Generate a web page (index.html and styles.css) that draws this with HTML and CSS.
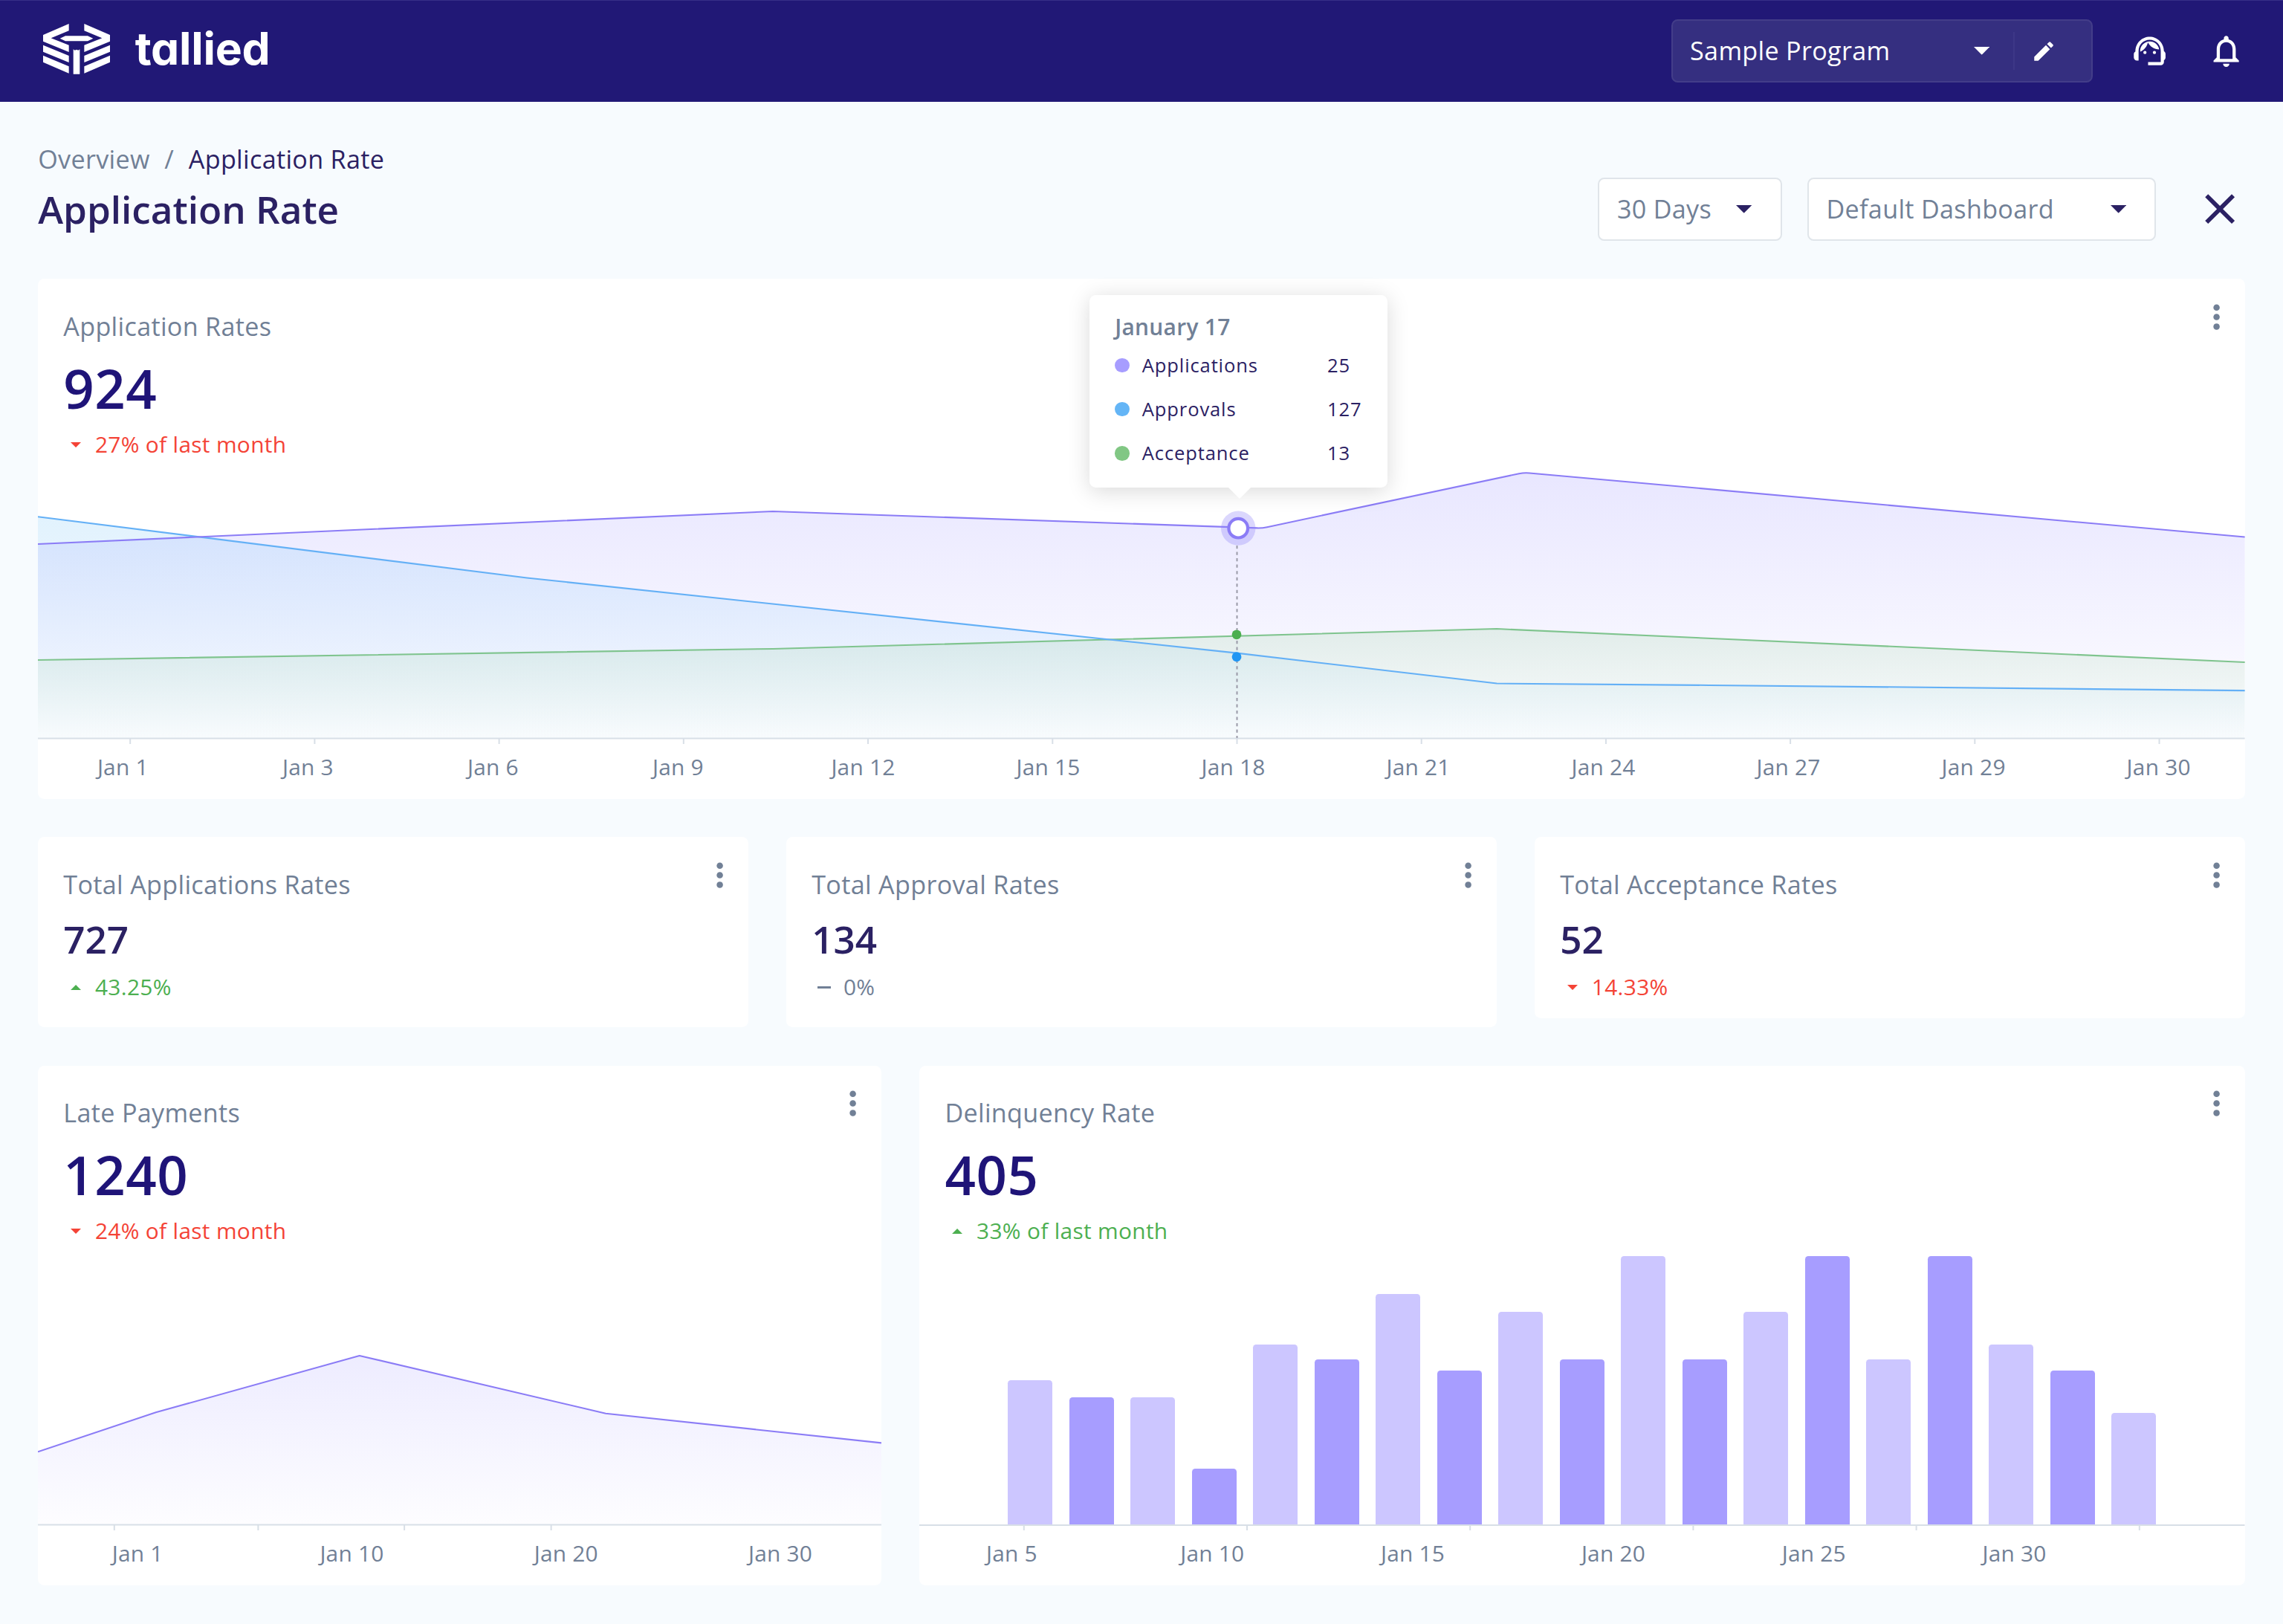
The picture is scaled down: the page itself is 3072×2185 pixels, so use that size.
FILE: index.html
```html
<!DOCTYPE html>
<html lang="en">
<head>
<meta charset="utf-8">
<title>Application Rate</title>
<link rel="stylesheet" href="styles.css">
</head>
<body>
<svg class="defs" width="0" height="0" aria-hidden="true">
  <defs>
    <linearGradient id="fill-purple" x1="0" y1="0" x2="0" y2="1"><stop offset="0" stop-color="#9d95ff" stop-opacity=".23"/><stop offset="1" stop-color="#9d95ff" stop-opacity=".01"/></linearGradient>
    <linearGradient id="fill-blue" x1="0" y1="0" x2="0" y2="1"><stop offset="0" stop-color="#64bcf6" stop-opacity=".19"/><stop offset="1" stop-color="#64bcf6" stop-opacity=".03"/></linearGradient>
    <linearGradient id="fill-green" x1="0" y1="0" x2="0" y2="1"><stop offset="0" stop-color="#81c784" stop-opacity=".17"/><stop offset="1" stop-color="#81c784" stop-opacity=".01"/></linearGradient>
    <linearGradient id="fill-late" x1="0" y1="0" x2="0" y2="1"><stop offset="0" stop-color="#9d95ff" stop-opacity=".18"/><stop offset="1" stop-color="#9d95ff" stop-opacity=".02"/></linearGradient>
    <symbol id="kebab" viewBox="0 0 24 24"><circle cx="12" cy="6" r="2"/><circle cx="12" cy="12" r="2"/><circle cx="12" cy="18" r="2"/></symbol>
    <symbol id="caret-down" viewBox="0 0 10 5"><path d="M0 0l5 5 5-5z"/></symbol>
    <symbol id="caret-up" viewBox="0 0 10 5"><path d="M0 5l5-5 5 5z"/></symbol>
  </defs>
</svg>

<header class="topbar">
  <div class="brand">
    <svg class="brand-mark" viewBox="0 0 270 204">
      <path d="M104 0v28L32 58l72 28v28L0 71V45z"/>
      <path d="M166 0v28l72 30-72 28v28l104-43V45z"/>
      <path d="M0 86l104 43v27L0 113zM0 128l104 44v28L0 155z"/>
      <path d="M270 86l-104 43v27l104-43zM270 128l-104 44v28l104-45z"/>
      <path d="M68 59l22-10h90l22 10-22 11H90z"/>
      <path d="M122 103l6 4 7-3 7 3 6-4v100h-26z"/>
    </svg>
    <span class="brand-name">tallied</span>
  </div>
  <div class="program">
    <span class="program-name">Sample Program</span>
    <svg class="caret"><use href="#caret-down"/></svg>
    <span class="program-edit">
      <svg viewBox="0 0 24 24"><path d="M3 17.25V21h3.75L17.81 9.94l-3.75-3.75L3 17.25zM20.71 7.04c.39-.39.39-1.02 0-1.41l-2.34-2.34a.9959.9959 0 0 0-1.41 0l-1.83 1.83 3.75 3.75 1.83-1.83z"/></svg>
    </span>
  </div>
  <svg class="top-icon" viewBox="0 0 24 24"><path d="M21 12.22C21 6.73 16.74 3 12 3c-4.69 0-9 3.65-9 9.28-.6.34-1 .98-1 1.72v2c0 1.1.9 2 2 2h1v-6.1c0-3.87 3.13-7 7-7s7 3.13 7 7V19h-8v2h8c1.1 0 2-.9 2-2v-1.22c.59-.31 1-.92 1-1.64v-2.3c0-.7-.41-1.31-1-1.62z"/><circle cx="9" cy="13" r="1"/><circle cx="15" cy="13" r="1"/><path d="M18 11.03C17.52 8.18 15.04 6 12.05 6c-3.03 0-6.29 2.51-6.03 6.45 2.47-1.01 4.33-3.21 4.86-5.89 1.31 2.63 4 4.44 7.12 4.47z"/></svg>
  <svg class="top-icon" viewBox="0 0 24 24"><path d="M12 22c1.1 0 2-.9 2-2h-4c0 1.1.9 2 2 2zm6-6v-5c0-3.07-1.63-5.64-4.5-6.32V4c0-.83-.67-1.5-1.5-1.5s-1.5.67-1.5 1.5v.68C7.64 5.36 6 7.92 6 11v5l-2 2v1h16v-1l-2-2zm-2 1H8v-6c0-2.48 1.51-4.5 4-4.5s4 2.02 4 4.5v6z"/></svg>
</header>

<main class="page">
  <nav class="crumbs"><a>Overview</a><span class="crumb-sep">/</span><span class="crumb-here">Application Rate</span></nav>
  <div class="title-row">
    <h1>Application Rate</h1>
    <div class="picker picker-days"><span>30 Days</span><svg class="caret"><use href="#caret-down"/></svg></div>
    <div class="picker picker-board"><span>Default Dashboard</span><svg class="caret"><use href="#caret-down"/></svg></div>
    <svg class="close" viewBox="0 0 24 24"><path d="M19 6.41L17.59 5 12 10.59 6.41 5 5 6.41 10.59 12 5 17.59 6.41 19 12 13.41 17.59 19 19 17.59 13.41 12z"/></svg>
  </div>

  <section class="card card-chart card-main">
    <svg class="kebab"><use href="#kebab"/></svg>
    <h2>Application Rates</h2>
    <p class="figure">924</p>
    <p class="delta down"><svg><use href="#caret-down"/></svg>27% of last month</p>
    <svg class="plot plot-main" viewBox="0 0 2969.6 370" preserveAspectRatio="none">
      <path fill="url(#fill-purple)" d="M0 101L989 57L1647 79.7L2000 4.9L2969.6 91.6V362.6H0z"/>
      <path fill="url(#fill-blue)" d="M0 64.2L658 146.5L1613 247.7L1963 288.6L2249 291L2969.6 298.2V362.6H0z"/>
      <path fill="url(#fill-green)" d="M0 257L989 242L1963 215.1L2969.6 260.1V362.6H0z"/>
      <path class="line green" d="M0 257L989 242L1963 215.1L2969.6 260.1"/>
      <path class="line blue" d="M0 64.2L658 146.5L1613 247.7L1963 288.6L2249 291L2969.6 298.2"/>
      <path class="line purple" d="M0 101L989 57L1640 79.4Q1647 79.7 1654 78.2L1993 6.2Q2000 4.9 2007 5.5L2969.6 91.6"/>
      <path class="axis" d="M0 362.6H2969.6"/>
      <path class="axis" d="M124.2 362V370M372.4 362V370M620.6 362V370M868.8 362V370M1117 362V370M1365.3 362V370M1613.5 362V370M1861.7 362V370M2109.9 362V370M2358.1 362V370M2606.3 362V370M2854.5 362V370"/>
      <path class="guide" d="M1613.5 103V362"/>
      <circle cx="1613" cy="222.9" r="6.4" fill="#4caf50"/>
      <circle cx="1613" cy="252.8" r="6.4" fill="#2196f3"/>
      <circle cx="1615.2" cy="79.7" r="23.2" fill="#8f82f8" fill-opacity=".32"/>
      <circle cx="1615.2" cy="79.7" r="12.8" fill="#fff" stroke="#8b7cf6" stroke-width="4.2"/>
    </svg>
    <div class="ticks"><span>Jan 1</span><span>Jan 3</span><span>Jan 6</span><span>Jan 9</span><span>Jan 12</span><span>Jan 15</span><span>Jan 18</span><span>Jan 21</span><span>Jan 24</span><span>Jan 27</span><span>Jan 29</span><span>Jan 30</span></div>
    <div class="tooltip">
      <h3>January 17</h3>
      <dl>
        <dt class="k-purple">Applications</dt><dd>25</dd>
        <dt class="k-blue">Approvals</dt><dd>127</dd>
        <dt class="k-green">Acceptance</dt><dd>13</dd>
      </dl>
    </div>
  </section>

  <div class="row row-stats">
    <section class="card card-stat">
      <svg class="kebab"><use href="#kebab"/></svg>
      <h2>Total Applications Rates</h2>
      <p class="figure">727</p>
      <p class="delta up"><svg><use href="#caret-up"/></svg>43.25%</p>
    </section>
    <section class="card card-stat">
      <svg class="kebab"><use href="#kebab"/></svg>
      <h2>Total Approval Rates</h2>
      <p class="figure">134</p>
      <p class="delta flat"><i></i>0%</p>
    </section>
    <section class="card card-stat card-short">
      <svg class="kebab"><use href="#kebab"/></svg>
      <h2>Total Acceptance Rates</h2>
      <p class="figure">52</p>
      <p class="delta down"><svg><use href="#caret-down"/></svg>14.33%</p>
    </section>
  </div>

  <div class="row row-bottom">
    <section class="card card-chart card-late">
      <svg class="kebab"><use href="#kebab"/></svg>
      <h2>Late Payments</h2>
      <p class="figure">1240</p>
      <p class="delta down"><svg><use href="#caret-down"/></svg>24% of last month</p>
      <svg class="plot plot-late" viewBox="0 0 1134.9 241" preserveAspectRatio="none">
        <path fill="url(#fill-late)" d="M0 135.3L158.7 82.3L432.7 6L764 83.7L1134.9 123.3V233.5H0z"/>
        <path class="line purple" d="M0 135.3L158.7 82.3L432.7 6L764 83.7L1134.9 123.3"/>
        <path class="axis" d="M0 233.5H1134.9M102.8 233V241M296.4 233V241M493.1 233V241M690.6 233V241"/>
      </svg>
      <div class="ticks"><span>Jan 1</span><span>Jan 10</span><span>Jan 20</span><span>Jan 30</span></div>
    </section>
    <section class="card card-chart card-delinquency">
      <svg class="kebab"><use href="#kebab"/></svg>
      <h2>Delinquency Rate</h2>
      <p class="figure">405</p>
      <p class="delta up"><svg><use href="#caret-up"/></svg>33% of last month</p>
      <div class="bars">
        <i style="height:53.7%"></i><i style="height:47.3%"></i><i style="height:47.3%"></i><i style="height:20.8%"></i><i style="height:66.8%"></i><i style="height:61.5%"></i><i style="height:85.7%"></i><i style="height:57.3%"></i><i style="height:79.2%"></i><i style="height:61.5%"></i><i style="height:100%"></i><i style="height:61.5%"></i><i style="height:79.2%"></i><i style="height:100%"></i><i style="height:61.5%"></i><i style="height:100%"></i><i style="height:66.8%"></i><i style="height:57.3%"></i><i style="height:41.4%"></i>
      </div>
      <svg class="plot plot-axis" viewBox="0 0 1783.5 8.6" preserveAspectRatio="none">
        <path class="axis" d="M0 1H1783.5M140.8 1V8.6M441 1V8.6M741.2 1V8.6M1041.4 1V8.6M1341.6 1V8.6M1641.8 1V8.6"/>
      </svg>
      <div class="ticks"><span>Jan 5</span><span>Jan 10</span><span>Jan 15</span><span>Jan 20</span><span>Jan 25</span><span>Jan 30</span></div>
    </section>
  </div>
</main>
</body>
</html>
```
FILE: styles.css
```css
/* 1rem = 10 layout units on a 1440-unit wide canvas */
html {
  font-size: 21.33333px;
}

* {
  box-sizing: border-box;
}

body {
  margin: 0;
  background: #f7fbfe;
  font-family: "Open Sans", "Noto Sans", sans-serif;
  font-size: 1.6rem;
  letter-spacing: 0.015rem;
  color: #718096;
}

h1, h2, h3, p, dl, dd {
  margin: 0;
}

.defs {
  position: absolute;
}

/* ---------- top bar ---------- */

.topbar {
  display: flex;
  align-items: center;
  gap: 2.4rem;
  height: 6.4rem;
  padding: 0 2.4rem 0 2.7rem;
  background: #211876;
  border-top: 1px solid #372f88;
}

.brand {
  display: flex;
  align-items: center;
  gap: 1.6rem;
  margin-right: auto;
  padding-bottom: 0.22rem;
  color: #fff;
}

.brand-mark {
  width: 4.22rem;
  height: 3.19rem;
  fill: #fff;
}

.brand-name {
  padding-bottom: 0.1rem;
  font-family: Inter, "Open Sans", sans-serif;
  font-weight: 700;
  font-size: 2.84rem;
  line-height: 3.2rem;
  letter-spacing: -0.01rem;
  font-feature-settings: "cv11";
}

.program {
  display: flex;
  align-items: center;
  width: 26.6rem;
  height: 4rem;
  padding-left: 1.1rem;
  background: #352f80;
  border: 2px solid #433d89;
  border-radius: 0.4rem;
  color: #fff;
}

.program-name {
  flex: 1;
  padding-bottom: 0.04rem;
}

.caret {
  width: 1rem;
  height: 0.5rem;
  fill: currentColor;
}

.program-edit {
  display: flex;
  align-items: center;
  width: 4.93rem;
  height: 2.4rem;
  margin-left: 1.5rem;
  padding-left: 1.05rem;
  border-left: 2px solid #3d3787;
}

.program-edit svg {
  width: 1.6rem;
  height: 1.6rem;
  fill: #fff;
}

.top-icon {
  width: 2.4rem;
  height: 2.4rem;
  fill: #fff;
}

/* ---------- page head ---------- */

.page {
  padding: 2.4rem;
}

.crumbs {
  display: flex;
  height: 2.4rem;
  line-height: 2.45rem;
}

.crumb-sep {
  margin: 0 0.92rem;
}

.crumb-here {
  color: #2b2163;
}

.title-row {
  display: flex;
  align-items: center;
  height: 4rem;
  margin-bottom: 2.4rem;
}

h1 {
  flex: 1;
  font-size: 2.4rem;
  font-weight: 600;
  letter-spacing: 0;
  line-height: 4rem;
  color: #2b2163;
}

.picker {
  display: flex;
  align-items: center;
  justify-content: space-between;
  height: 4rem;
  padding: 0 1.8rem 0 1.1rem;
  background: #fff;
  border: 2px solid #e0e5ea;
  border-radius: 0.4rem;
}

.picker span {
  padding-bottom: 0.04rem;
}

.picker .caret {
  color: #2b2163;
}

.picker-days {
  width: 11.6rem;
  margin-right: 1.6rem;
}

.picker-board {
  width: 22rem;
  margin-right: 2.4rem;
}

.close {
  width: 3.2rem;
  height: 3.2rem;
  fill: #2b2163;
}

/* ---------- cards ---------- */

.card {
  position: relative;
  display: flex;
  flex-direction: column;
  padding-top: 1.8rem;
  background: #fff;
  border-radius: 0.4rem;
}

.card-chart {
  height: 32.8rem;
}

.card h2 {
  padding-left: 1.6rem;
  font-size: 1.6rem;
  font-weight: 400;
  line-height: 2.4rem;
}

.kebab {
  position: absolute;
  top: 1.2rem;
  right: 0.6rem;
  width: 2.4rem;
  height: 2.4rem;
  fill: #718096;
}

.figure {
  margin-top: 0.64rem;
  padding-left: 1.6rem;
  font-size: 3.4rem;
  font-weight: 600;
  letter-spacing: 0.025rem;
  line-height: 4rem;
  color: #1f1478;
}

.delta {
  display: flex;
  align-items: center;
  margin-top: 0.61rem;
  padding-left: 1.6rem;
  font-size: 1.4rem;
  line-height: 2rem;
}

.delta svg {
  width: 0.66rem;
  height: 0.33rem;
  margin: 0 0.87rem 0 0.47rem;
  fill: currentColor;
}

.delta i {
  width: 0.84rem;
  height: 3px;
  margin: 0 0.78rem 0 0.38rem;
  background: currentColor;
}

.up { color: #4caf50; }
.down { color: #f44336; }
.flat { color: #718096; }

.row {
  display: grid;
  gap: 2.4rem;
  align-items: start;
  margin-top: 2.4rem;
}

.row-stats {
  grid-template-columns: repeat(3, 1fr);
}

.card-stat {
  height: 12rem;
}

.card-short {
  height: 11.4rem;
}

.card-stat .figure {
  margin-top: 0.61rem;
  font-size: 2.4rem;
  letter-spacing: 0;
  line-height: 3.2rem;
  color: #2b2163;
}

.card-stat .delta {
  margin-top: 0.45rem;
}

.row-bottom {
  grid-template-columns: 53.2rem 1fr;
}

/* ---------- charts ---------- */

.plot {
  display: block;
  width: 100%;
  margin-top: auto;
}

.plot-main { height: 17.34rem; }
.plot-late { height: 11.3rem; }

.plot-axis {
  height: 0.4rem;
  margin-top: 0;
}

.line {
  fill: none;
  stroke-width: 2.1;
  stroke-linejoin: round;
}

.purple { stroke: #8b7cf6; }
.blue { stroke: #64b0f6; }
.green { stroke: #7fc48e; }

.axis {
  fill: none;
  stroke: #d8dfe7;
  stroke-width: 2;
}

.guide {
  stroke: #9a9aa8;
  stroke-width: 2;
  stroke-dasharray: 4.27 4.27;
}

.ticks {
  display: flex;
  justify-content: space-between;
  margin: 0.47rem 0 1rem;
  font-size: 1.4rem;
  letter-spacing: 0.01rem;
  line-height: 2rem;
}

.ticks span {
  width: 6rem;
  text-align: center;
}

.card-main .ticks { padding: 0 2.44rem 0 2.35rem; }
.card-late .ticks { padding: 0 3.38rem 0 3.28rem; }
.card-delinquency .ticks { padding: 0 11.54rem 0 2.82rem; }

.bars {
  display: flex;
  align-items: flex-end;
  justify-content: space-between;
  height: 16.93rem;
  margin-top: auto;
  padding: 0 5.6rem 0 5.58rem;
}

.bars i {
  width: 2.81rem;
  background: #a79dff;
  border-radius: 0.2rem 0.2rem 0 0;
}

.bars i:nth-child(odd) {
  background: #ccc6ff;
}

/* ---------- tooltip ---------- */

.tooltip {
  position: absolute;
  top: 1.03rem;
  left: 66.32rem;
  width: 18.8rem;
  height: 12.14rem;
  padding: 1rem 0 0 1.6rem;
  background: #fff;
  border-radius: 0.4rem;
  box-shadow: 0 0.2rem 1.4rem rgba(0, 0, 0, 0.15);
}

.tooltip::after {
  content: "";
  position: absolute;
  top: 100%;
  left: 8.75rem;
  border: 0.72rem solid transparent;
  border-top-color: #fff;
  border-bottom: 0;
}

.tooltip h3 {
  font-size: 1.4rem;
  font-weight: 600;
  line-height: 2rem;
  margin-bottom: 0.03rem;
}

.tooltip dl {
  display: grid;
  grid-template-columns: 13.4rem 1fr;
  font-size: 1.2rem;
  letter-spacing: 0.04rem;
  line-height: 2.77rem;
  color: #2b2163;
}

.tooltip dt {
  display: flex;
  align-items: center;
  gap: 0.8rem;
}

.tooltip dt::before {
  content: "";
  width: 0.92rem;
  height: 0.92rem;
  border-radius: 50%;
}

.k-purple::before { background: #a79dff; }
.k-blue::before { background: #64b5f6; }
.k-green::before { background: #81c784; }
```
